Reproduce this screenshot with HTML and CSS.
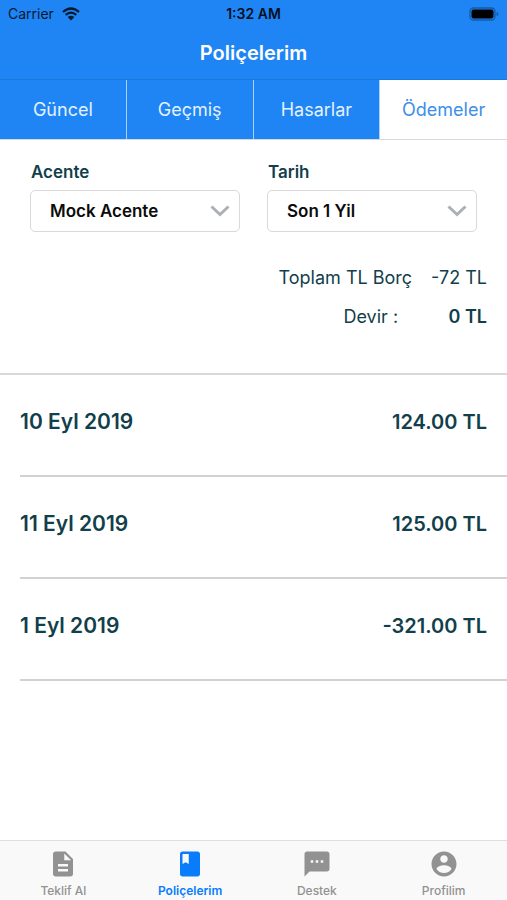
FILE: index.html
```html
<!DOCTYPE html>
<html lang="tr">
<head>
<meta charset="utf-8">
<meta name="viewport" content="width=device-width, initial-scale=1">
<title>Poliçelerim</title>
<link rel="stylesheet" href="styles.css">
</head>
<body>
<header class="header">
  <div class="status">
    <span class="carrier">Carrier
      <svg class="wifi" viewBox="0 0 18 14" aria-hidden="true"><path d="M1 5Q9-2 17 5M3.700 7.900Q9 3.300 14.300 7.900" fill="none" stroke="#051a30" stroke-width="2.300"/><path d="M5.700 10Q9 7.300 12.300 10L9 13.500Z" fill="#051a30"/></svg>
    </span>
    <span class="clock">1:32 AM</span>
    <svg class="battery" viewBox="0 0 30 14" aria-hidden="true"><rect x="1" y="1" width="25" height="12" rx="3.500" fill="none" stroke="#125ba8" stroke-width="1.300"/><rect x="2.500" y="2.500" width="22" height="9" rx="2" fill="#000"/><path d="M27.500 5v4q2-.7 2-2t-2-2" fill="#125ba8"/></svg>
  </div>
  <h1 class="title">Poliçelerim</h1>
</header>
<nav class="tabs">
  <button class="tab" type="button">Güncel</button>
  <button class="tab" type="button">Geçmiş</button>
  <button class="tab" type="button">Hasarlar</button>
  <button class="tab tab-active" type="button">Ödemeler</button>
</nav>
<main class="main">
  <section class="summary">
    <div class="filters">
      <div class="field">
        <label class="label" for="agency">Acente</label>
        <div class="picker">
          <select class="select" id="agency"><option>Mock Acente</option></select>
          <svg class="chevron" viewBox="0 0 20 12" aria-hidden="true"><path d="M1.500 1.500L10 9.500L18.500 1.500"/></svg>
        </div>
      </div>
      <div class="field">
        <label class="label" for="period">Tarih</label>
        <div class="picker">
          <select class="select" id="period"><option>Son 1 Yil</option></select>
          <svg class="chevron" viewBox="0 0 20 12" aria-hidden="true"><path d="M1.500 1.500L10 9.500L18.500 1.500"/></svg>
        </div>
      </div>
    </div>
    <dl class="totals">
      <dt>Toplam TL Borç</dt><dd>-72 TL</dd>
      <dt class="carry">Devir :</dt><dd class="strong">0 TL</dd>
    </dl>
  </section>
  <ul class="payments">
    <li class="payment"><span class="date">10 Eyl 2019</span><span>124.00 TL</span></li>
    <li class="payment"><span class="date">11 Eyl 2019</span><span>125.00 TL</span></li>
    <li class="payment"><span class="date">1 Eyl 2019</span><span>-321.00 TL</span></li>
  </ul>
</main>
<nav class="bottom">
  <a class="item" href="#teklif"><svg class="icon" viewBox="0 0 24 24" aria-hidden="true"><path d="M14 2H6c-1.100 0-2 .9-2 2v16c0 1.100.9 2 2 2h12c1.100 0 2-.9 2-2V8l-6-6zm2 16H8v-2h8v2zm0-4H8v-2h8v2zm-3-5V3.500L18.500 9H13z"/></svg>Teklif Al</a>
  <a class="item item-active" href="#policeler"><svg class="icon" viewBox="0 0 24 24" aria-hidden="true"><path fill-rule="evenodd" d="M18 2H6c-1.100 0-2 .9-2 2v16c0 1.100.9 2 2 2h12c1.100 0 2-.9 2-2V4c0-1.100-.9-2-2-2zM6 4h5v8l-2.500-1.500L6 12V4z"/></svg>Poliçelerim</a>
  <a class="item" href="#destek"><svg class="icon" viewBox="0 0 24 24" aria-hidden="true"><path d="M20 2H4c-1.100 0-2 .9-2 2v18l4-4h14c1.100 0 2-.9 2-2V4c0-1.100-.9-2-2-2zM9 11H7V9h2v2zm4 0h-2V9h2v2zm4 0h-2V9h2v2z"/></svg>Destek</a>
  <a class="item" href="#profil"><svg class="icon" viewBox="0 0 24 24" aria-hidden="true"><path d="M12 2C6.480 2 2 6.480 2 12s4.480 10 10 10 10-4.480 10-10S17.520 2 12 2zm0 3c1.660 0 3 1.340 3 3s-1.340 3-3 3-3-1.340-3-3 1.340-3 3-3zm0 14.200c-2.500 0-4.710-1.280-6-3.220.03-1.990 4-3.080 6-3.080 1.990 0 5.970 1.090 6 3.080-1.290 1.940-3.500 3.220-6 3.220z"/></svg>Profilim</a>
</nav>
</body>
</html>
```
FILE: styles.css
```css
* {
  box-sizing: border-box;
}

body {
  margin: 0;
  min-height: 100vh;
  display: flex;
  flex-direction: column;
  background: #fff;
  color: #123f4b;
  font-family: Inter, "Liberation Sans", sans-serif;
}

.header {
  background: #1f85f4;
}

.status {
  display: grid;
  grid-template-columns: 1fr auto 1fr;
  align-items: center;
  height: 27px;
  padding: 0 8px;
  color: #051a30;
  font-size: 14px;
}

.carrier {
  display: flex;
  align-items: center;
  gap: 8px;
}

.wifi {
  width: 18px;
  height: 14px;
}

.clock {
  color: #04101f;
  font-weight: 600;
}

.battery {
  justify-self: end;
  width: 30px;
  height: 14px;
}

.title {
  margin: 0;
  height: 52px;
  line-height: 52px;
  text-align: center;
  color: #fff;
  font-size: 20px;
  font-weight: 600;
}

.tabs {
  display: grid;
  grid-template-columns: repeat(4, 1fr);
  height: 61px;
  border-bottom: 1px solid #d4d9de;
  border-top: 1px solid #1c78dc;
}

.tab {
  border: 0;
  border-right: 1px solid #a9d0fa;
  padding: 0;
  background: #1f85f4;
  color: #e4f1ff;
  font: 400 18px Inter, "Liberation Sans", sans-serif;
}

.tab-active {
  border-right: 0;
  background: #fff;
  color: #3b8fe8;
}

.main {
  flex: 1;
}

.summary {
  padding: 22px 20px 37px 30px;
  border-bottom: 2px solid #d9d9d9;
}

.filters {
  display: grid;
  grid-template-columns: 1fr 1fr;
  gap: 27px;
  padding-right: 10px;
}

.label {
  display: block;
  padding-left: 1px;
  line-height: 20px;
  font-size: 17px;
  font-weight: 600;
}

.picker {
  display: grid;
  align-items: center;
  margin-top: 8px;
}

.select {
  grid-area: 1 / 1;
  appearance: none;
  width: 100%;
  height: 42px;
  padding: 0 40px 0 19px;
  border: 1px solid #d9d9d9;
  border-radius: 5px;
  background: #fff;
  color: #0b0b0b;
  font: 600 17px Inter, "Liberation Sans", sans-serif;
}

.chevron {
  grid-area: 1 / 1;
  justify-self: end;
  width: 20px;
  height: 12px;
  margin-right: 10px;
  fill: none;
  stroke: #acb0b5;
  stroke-width: 3px;
  pointer-events: none;
}

.totals {
  display: grid;
  grid-template-columns: auto auto;
  justify-content: end;
  column-gap: 19px;
  margin: 26px 0 0;
  line-height: 39px;
  font-size: 18px;
  text-align: right;
}

.totals dd {
  margin: 0;
}

.carry {
  padding-right: 14px;
}

.strong {
  font-weight: 600;
}

.payments {
  margin: 0;
  padding: 0 0 0 20px;
  list-style: none;
}

.payment {
  display: flex;
  justify-content: space-between;
  height: 102px;
  padding: 33px 20px 0 0;
  border-bottom: 2px solid #d2d2d2;
  line-height: 28px;
  font-size: 20px;
  font-weight: 600;
}

.date {
  font-size: 21px;
}

.bottom {
  display: grid;
  grid-template-columns: repeat(4, 1fr);
  height: 60px;
  border-top: 1px solid #dedede;
  background: #f9f9f9;
}

.item {
  display: flex;
  flex-direction: column;
  align-items: center;
  padding-top: 8px;
  color: #929292;
  font-size: 12px;
  font-weight: 500;
  line-height: 24px;
  text-decoration: none;
}

.item-active {
  color: #087cfb;
  font-weight: 600;
}

.icon {
  width: 30px;
  height: 30px;
  fill: currentColor;
}
```
